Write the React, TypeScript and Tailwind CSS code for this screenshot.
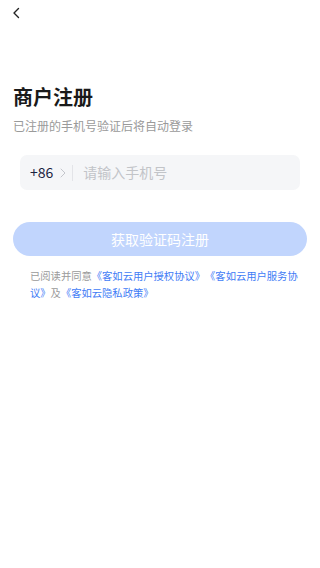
import React from "react";

const font = {
  fontFamily: '"Noto Sans CJK SC", "Noto Sans", sans-serif',
};

export default function App() {
  return (
    <div
      className="w-[320px] h-[568px] bg-white flex flex-col overflow-hidden"
      style={font}
    >
      {/* top bar */}
      <div className="h-[24px] flex items-center pl-[12px] pt-[1px]">
        <svg width="9" height="12" viewBox="0 0 9 12" fill="none">
          <path
            d="M6.5 1.5L2 6l4.5 4.5"
            stroke="#222"
            strokeWidth="1.4"
            strokeLinecap="round"
            strokeLinejoin="round"
          />
        </svg>
      </div>

      <div className="px-[13px] mt-[59px]">
        <h1 className="text-[20px] leading-[28px] font-semibold text-[#1a1a1a]">
          商户注册
        </h1>
        <p className="mt-[7px] text-[12px] leading-[16px] text-[#9a9a9a]">
          已注册的手机号验证后将自动登录
        </p>
      </div>

      <div className="mx-[20px] mt-[21px] h-[35px] rounded-[7px] bg-[#f5f6f8] flex items-center pl-[10px]">
        <span className="text-[14px] text-[#1b2340]">+86</span>
        <svg
          className="ml-[7px]"
          width="6"
          height="10"
          viewBox="0 0 6 10"
          fill="none"
        >
          <path
            d="M1 1l4 4-4 4"
            stroke="#c4c6cc"
            strokeWidth="1"
            strokeLinecap="round"
            strokeLinejoin="round"
          />
        </svg>
        <div className="ml-[6px] w-px h-[16px] bg-[#e3e4e8]" />
        <span className="ml-[10px] text-[14px] text-[#c2c4c8]">
          请输入手机号
        </span>
      </div>

      <div className="mx-[13px] mt-[32px] h-[34px] rounded-full bg-[#c1d5fd] flex items-center justify-center">
        <span className="text-[14px] text-white">获取验证码注册</span>
      </div>

      <p className="ml-[30px] w-[272px] mt-[11px] text-[10.3px] leading-[17px] text-[#9a9a9a] [text-spacing-trim:space-all]">
        已阅读并同意
        <span className="text-[#3f7cf6]">《客如云用户授权协议》</span>
        <span className="text-[#3f7cf6]">《客如云用户服务协议》</span>及
        <span className="text-[#3f7cf6]">《客如云隐私政策》</span>
      </p>
    </div>
  );
}
